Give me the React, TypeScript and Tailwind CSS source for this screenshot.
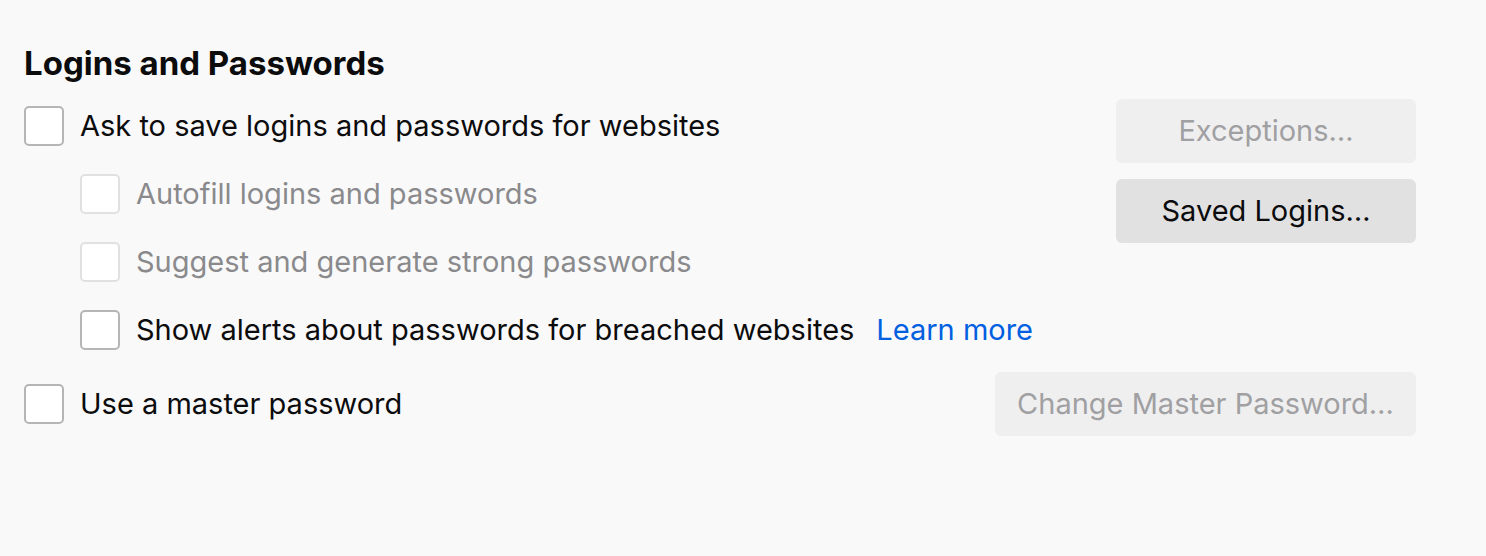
import React from 'react';

const font = { fontFamily: 'Inter, "Noto Sans", sans-serif' };

function Box({ disabled = false }: { disabled?: boolean }) {
  return (
    <span
      className={`inline-block w-10 h-10 shrink-0 rounded-[5px] border-2 bg-white ${
        disabled ? 'border-[#e1e1e2]' : 'border-[#b5b5b7]'
      }`}
    />
  );
}

export default function App() {
  return (
    <div className="w-[1486px] h-[556px] bg-[#f9f9fa] text-[#0c0c0d]" style={font}>
      <div className="pl-6 pr-[70px] pt-[44px]">
        <h2 className="text-[33px] leading-[38px] font-bold">Logins and Passwords</h2>

        <div className="flex justify-between mt-[24px]">
          <div className="flex flex-col">
            <label className="flex items-center gap-4 h-10 text-[29px]">
              <Box />
              <span>Ask to save logins and passwords for websites</span>
            </label>
            <div className="pl-14 flex flex-col gap-7 mt-7">
              <label className="flex items-center gap-4 h-10 text-[29px] text-[#8a8a8c]">
                <Box disabled />
                <span>Autofill logins and passwords</span>
              </label>
              <label className="flex items-center gap-4 h-10 text-[29px] text-[#8a8a8c]">
                <Box disabled />
                <span>Suggest and generate strong passwords</span>
              </label>
              <label className="flex items-center gap-4 h-10 text-[29px]">
                <Box />
                <span>Show alerts about passwords for breached websites</span>
                <a className="ml-[6px] text-[#0060df]">Learn more</a>
              </label>
            </div>
          </div>
          <div className="flex flex-col gap-4 mt-[-7px]">
            <button className="w-[300px] h-[64px] rounded-[6px] bg-[#efeff0] text-[29px] text-[#a0a0a2]">
              Exceptions…
            </button>
            <button className="w-[300px] h-[64px] rounded-[6px] bg-[#e1e1e2] text-[29px]">
              Saved Logins…
            </button>
          </div>
        </div>

        <div className="flex justify-between items-center mt-[22px]">
          <label className="flex items-center gap-4 h-10 text-[29px]">
            <Box />
            <span>Use a master password</span>
          </label>
          <button className="w-[421px] h-[64px] rounded-[6px] bg-[#efeff0] text-[29px] text-[#a0a0a2]">
            Change Master Password…
          </button>
        </div>
      </div>
    </div>
  );
}
